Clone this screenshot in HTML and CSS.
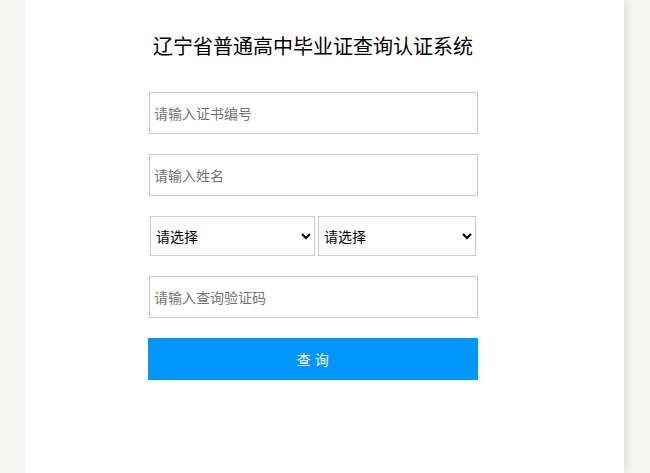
FILE: index.html
```html
<!DOCTYPE html>
<html lang="zh-CN">
<head>
<meta charset="utf-8">
<title>辽宁省普通高中毕业证查询认证系统</title>
<link rel="stylesheet" href="styles.css">
</head>
<body>
<div class="page">
  <div class="panel">
    <div class="content">
      <h1 class="title">辽宁省普通高中毕业证查询认证系统</h1>
      <form class="form">
        <input class="field" type="text" placeholder="请输入证书编号">
        <input class="field" type="text" placeholder="请输入姓名">
        <div class="selects">
          <select class="sel sel-a"><option>请选择</option></select>
          <select class="sel sel-b"><option>请选择</option></select>
        </div>
        <input class="field" type="text" placeholder="请输入查询验证码">
        <button class="btn" type="button">查 询</button>
      </form>
    </div>
  </div>
</div>
</body>
</html>
```
FILE: styles.css
```css
html, body {
  margin: 0;
  padding: 0;
  height: 100%;
  background: #f5f5f3;
  font-family: "Noto Sans CJK SC", "Liberation Sans", sans-serif;
  overflow: hidden;
}
.page {
  height: 100%;
  padding-left: 25px;
}
.panel {
  width: 599px;
  height: 100%;
  background: #ffffff;
  box-shadow: 4px 0 8px rgba(0, 0, 0, 0.07);
}
.content {
  width: 330px;
  margin-left: 123px;
  padding-top: 31px;
  display: flex;
  flex-direction: column;
}
.title {
  margin: 0;
  font-size: 20px;
  font-weight: normal;
  line-height: 30px;
  color: #000;
  text-align: center;
}
.form {
  margin-top: 31px;
  display: flex;
  flex-direction: column;
}
.field {
  box-sizing: border-box;
  width: 329px;
  height: 42px;
  margin: 0 0 20px 1px;
  padding: 0 4px;
  border: 1px solid #cccccc;
  border-radius: 0;
  outline: none;
  font-family: inherit;
  font-size: 14px;
  color: #333;
  background: #fff;
}
.field::placeholder {
  color: #757575;
}
.selects {
  display: flex;
  gap: 3px;
  margin: 0 0 20px 2px;
}
.sel {
  box-sizing: border-box;
  height: 40px;
  padding: 0 1px;
  border: 1px solid #cccccc;
  border-radius: 0;
  background: #fff;
  font-family: inherit;
  font-size: 14px;
  color: #000;
  outline: none;
}
.sel-a { width: 165px; }
.sel-b { width: 158px; }
.btn {
  width: 330px;
  height: 42px;
  border: none;
  background: #0096ff;
  color: #fff;
  font-family: inherit;
  font-size: 14px;
  letter-spacing: 0.5px;
  cursor: pointer;
  padding: 0;
}
```
